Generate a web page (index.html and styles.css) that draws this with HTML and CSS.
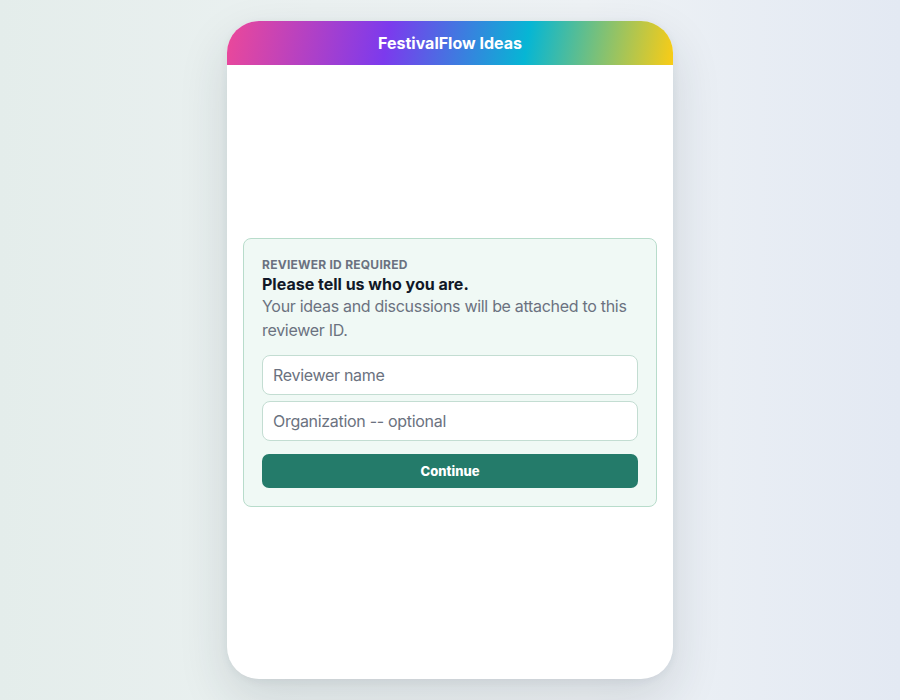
FILE: index.html
```html
<!DOCTYPE html>
<html lang="en">
<head>
<meta charset="utf-8">
<title>FestivalFlow Ideas</title>
<link rel="stylesheet" href="styles.css">
</head>
<body>
<div class="phone">
  <header class="topbar">FestivalFlow Ideas</header>
  <main class="screen">
    <section class="card">
      <div class="eyebrow">REVIEWER ID REQUIRED</div>
      <h1 class="title">Please tell us who you are.</h1>
      <p class="desc">Your ideas and discussions will be attached to this reviewer ID.</p>
      <form class="form">
        <input class="field" type="text" placeholder="Reviewer name" autofocus>
        <input class="field" type="text" placeholder="Organization -- optional">
        <button class="btn" type="button">Continue</button>
      </form>
    </section>
  </main>
</div>
</body>
</html>
```

FILE: styles.css
```css
* { box-sizing: border-box; }
html, body { margin: 0; padding: 0; }
body {
  min-height: 100vh;
  display: flex;
  align-items: center;
  justify-content: center;
  font-family: Inter, "Noto Sans", sans-serif;
  background: linear-gradient(90deg, #e4edeb 0%, #ebf1f1 35%, #eef2f5 65%, #e3e9f3 100%);
}
.phone {
  width: 446px;
  height: 658px;
  background: #ffffff;
  border-radius: 32px;
  overflow: hidden;
  display: flex;
  flex-direction: column;
  box-shadow: 0 20px 50px rgba(30, 45, 60, 0.14), 0 2px 8px rgba(30, 45, 60, 0.06);
}
.topbar {
  height: 44px;
  flex: none;
  display: flex;
  align-items: center;
  justify-content: center;
  color: #ffffff;
  font-size: 16px;
  font-weight: 700;
  background: linear-gradient(100deg, #ec4899 0%, #7c3aed 36%, #06b6d4 67%, #facc15 100%);
}
.screen {
  flex: 1;
  display: flex;
  flex-direction: column;
  justify-content: center;
  padding: 0 16px;
}
.card {
  background: #f0f9f5;
  border: 1px solid #b8dccb;
  border-radius: 8px;
  padding: 18px;
}
.eyebrow {
  font-size: 12px;
  line-height: 16px;
  font-weight: 700;
  color: #6b7280;
  letter-spacing: 0.25px;
}
.title {
  margin: 1px 0 0;
  font-size: 16px;
  line-height: 20px;
  font-weight: 700;
  color: #111827;
}
.desc {
  margin: 0;
  font-size: 16px;
  line-height: 24px;
  color: #6b7280;
  letter-spacing: -0.3px;
}
.form {
  margin-top: 13px;
  display: flex;
  flex-direction: column;
  gap: 6px;
}
.field {
  height: 40px;
  border: 1px solid #c3ddd2;
  border-radius: 8px;
  background: #ffffff;
  padding: 0 10px;
  font-family: inherit;
  font-size: 16px;
  letter-spacing: -0.3px;
  color: #111827;
  caret-color: #111827;
  outline: none;
}
.field::placeholder { color: #6b7280; }
.btn {
  margin-top: 7px;
  height: 34px;
  border: 0;
  border-radius: 7px;
  background: #247b6a;
  color: #ffffff;
  font-family: inherit;
  font-size: 13px;
  font-weight: 800;
  cursor: pointer;
}
```
